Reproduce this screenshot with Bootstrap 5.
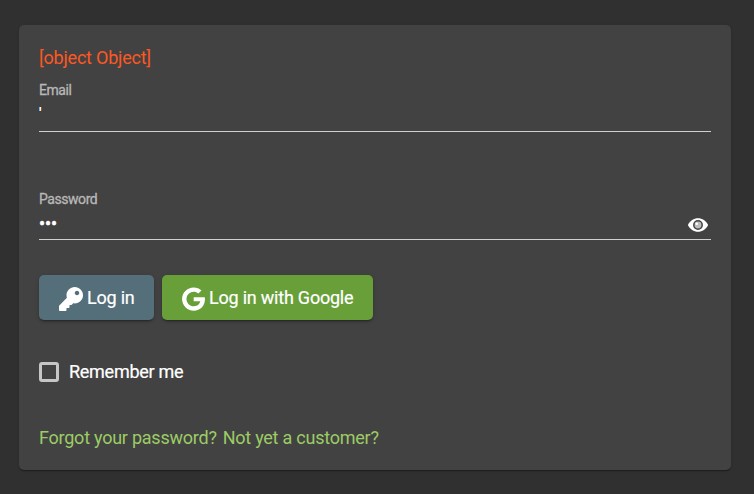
<!DOCTYPE html>
<html lang="en">
<head>
<meta charset="utf-8">
<meta name="viewport" content="width=device-width, initial-scale=1">
<title>Log in</title>
<link rel="stylesheet" href="https://cdn.jsdelivr.net/npm/bootstrap@5.3.0/dist/css/bootstrap.min.css">
<style>
body{background:#303030;color:#fff;font-family:Roboto,sans-serif;font-size:18px;line-height:24px;letter-spacing:-.22px;height:494px;overflow:hidden}
.login-card{width:712px;height:445px;margin:25px 0 0 19px;padding:21px 20px 0;background:#424242;border:0;border-radius:5px;color:#fff;box-shadow:0 2px 1px -1px rgba(0,0,0,.2),0 1px 1px rgba(0,0,0,.14),0 1px 3px rgba(0,0,0,.12)}
.error-text{color:#ff5722}
.field{border-bottom:1px solid #d0d0d0}
.field-email{height:62px}
.field-pass{height:61px;margin-top:47px}
.field label{font-size:14px;line-height:16px;color:#b8b8b8;height:16px;font-weight:400;letter-spacing:-.45px;-webkit-text-stroke:.3px #b8b8b8;margin-top:12px}
.field .form-control{background:transparent;color:#fff;font-size:18px;line-height:24px;height:24px;border-radius:0;box-shadow:none;font-family:Roboto,sans-serif;letter-spacing:-.1px}
.field-email .form-control{font-size:15px;font-weight:700;margin-top:3px}
.pass-row{margin-top:5px}
.pass-row svg{margin:1px 3px 0 0}
.pass-row .form-control{-webkit-text-stroke:.5px #fff}
.actions{margin-top:35px;gap:8px}
.btn-main{height:45px;padding:0 20px;border:0;border-radius:5px;color:#fff;font-size:18px;line-height:45px;letter-spacing:-.22px;-webkit-text-stroke:.2px #fff;box-shadow:0 3px 1px -2px rgba(0,0,0,.2),0 2px 2px rgba(0,0,0,.14),0 1px 5px rgba(0,0,0,.12)}
.btn-slate{width:115px;background:#546e7a}
.btn-green{width:211px;background:#689f38}
.btn-main svg{flex:none;margin-top:2px}
.remember{margin-top:40px;height:24px}
.remember label{letter-spacing:-.27px;-webkit-text-stroke:.2px #fff}
.remember .form-check-input{width:20px;height:20px;margin:0 10px 0 0;border:3px solid #c6c6c6;border-radius:3px;background:transparent}
.links{margin-top:42px;gap:6px}
.links a{color:#9ccc65;letter-spacing:-.24px}
</style>
<script src="https://cdn.jsdelivr.net/npm/bootstrap@5.3.0/dist/js/bootstrap.bundle.min.js"></script>
</head>
<body>
<form class="card login-card">
  <div class="error-text">[object Object]</div>
  <div class="field field-email d-flex flex-column">
    <label for="email">Email</label>
    <input id="email" type="text" class="form-control border-0 p-0" value="'">
  </div>
  <div class="field field-pass d-flex flex-column">
    <label for="password">Password</label>
    <div class="pass-row d-flex align-items-center">
      <input id="password" type="password" class="form-control border-0 p-0" value="abc">
      <svg class="flex-shrink-0" width="20" height="18" viewBox="0 0 20 18"><path fill="#fff" d="M.1 8.5C2 4.800 5.700 2.250 10 2.250s8 2.550 9.900 6.250a1.100 1.100 0 0 1 0 1C18 13.200 14.300 15.750 10 15.750S2 13.200.1 9.500a1.100 1.100 0 0 1 0-1z"/><circle cx="10" cy="9" r="4.200" fill="#bdbdbd" stroke="#424242" stroke-width="1.500"/><circle cx="8.700" cy="7.800" r="1.300" fill="#fff"/></svg>
    </div>
  </div>
  <div class="actions d-flex">
    <button type="button" class="btn btn-main btn-slate d-flex align-items-center text-nowrap"><svg class="me-1" width="24" height="24" viewBox="0 0 512 512" fill="#fff"><path d="M512 176.001C512 273.203 433.202 352 336 352c-11.22 0-22.19-1.062-32.827-3.069l-24.012 27.014A23.999 23.999 0 0 1 261.223 384H224v40c0 13.255-10.745 24-24 24h-40v40c0 13.255-10.745 24-24 24H24c-13.255 0-24-10.745-24-24v-78.059c0-6.365 2.529-12.47 7.029-16.971l161.802-161.802C163.108 213.814 160 195.271 160 176 160 78.798 238.797.001 335.999 0 433.488-.001 512 78.511 512 176.001zM336 128c0 26.51 21.49 48 48 48s48-21.49 48-48-21.49-48-48-48-48 21.49-48 48z"/></svg>Log in</button>
    <button type="button" class="btn btn-main btn-green d-flex align-items-center text-nowrap"><svg class="me-1" width="23" height="24" viewBox="0 0 488 512" fill="#fff"><path d="M488 261.8C488 403.3 391.1 504 248 504 110.8 504 0 393.2 0 256S110.8 8 248 8c66.8 0 123 24.5 166.3 64.9l-67.5 64.9C258.5 52.6 94.3 116.6 94.3 256c0 86.5 69.1 156.6 153.7 156.6 98.2 0 135-70.4 140.8-106.9H248v-85.3h236.1c2.3 12.7 3.9 24.9 3.9 41.4z"/></svg>Log in with Google</button>
  </div>
  <div class="remember d-flex align-items-center">
    <input id="remember" type="checkbox" class="form-check-input">
    <label for="remember">Remember me</label>
  </div>
  <div class="links d-flex">
    <a class="text-decoration-none" href="#">Forgot your password?</a>
    <a class="text-decoration-none" href="#">Not yet a customer?</a>
  </div>
</form>
</body>
</html>
